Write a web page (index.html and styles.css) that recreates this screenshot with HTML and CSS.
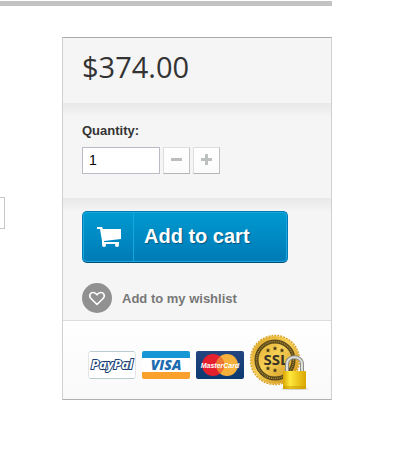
FILE: index.html
```
<!DOCTYPE html>
<html lang="en">
<head>
  <meta charset="UTF-8">
  <meta name="viewport" content="width=device-width, initial-scale=1.0">
  <title>Product</title>
  <link rel="stylesheet" href="styles.css">
</head>
<body>

  <div class="page">
    <div class="product">
      <div class="info"></div>

      <form class="buy-box">
        <div class="price-box">
          <p class="price">$374.00</p>
        </div>

        <div class="quantity-box">
          <label for="quantity">Quantity:</label>
          <div class="quantity-row">
            <input class="quantity" id="quantity" type="text" value="1">
            <button class="step" type="button" aria-label="Subtract">
              <svg width="11" height="11" viewBox="0 0 11 11"><path d="M0 4h11v3H0z" fill="#bdbdbd"/></svg>
            </button>
            <button class="step" type="button" aria-label="Add">
              <svg width="11" height="11" viewBox="0 0 11 11"><path d="M4 0h3v4h4v3H7v4H4V7H0V4h4z" fill="#bdc1bd"/></svg>
            </button>
          </div>
        </div>

        <div class="actions">
          <button class="add-to-cart" type="submit">
            <span class="cart-icon">
              <svg width="24" height="20" viewBox="0 0 24 20" fill="#fff">
                <path d="M0 0h5l1 2h18v10L7 14v1h15v2H5v-3L3 2H0z"/>
                <circle cx="7" cy="18" r="2"/>
                <circle cx="20" cy="18" r="2"/>
              </svg>
            </span>
            <span class="cart-text">Add to cart</span>
          </button>
          <a class="wishlist" href="#">
            <svg width="30" height="30" viewBox="0 0 30 30">
              <circle cx="15" cy="15" r="15" fill="#919191"/>
              <path d="M15 21.500L9.200 15.800C6 12.300 8.600 9.500 11.200 9.500c1.800 0 3 1.100 3.800 2.300 .8-1.200 2-2.300 3.800-2.300 2.600 0 5.200 2.800 2 6.300z" fill="none" stroke="#fff" stroke-width="1.600" stroke-linejoin="round"/>
            </svg>
            <span>Add to my wishlist</span>
          </a>
        </div>

        <div class="payment">
          <svg class="card" width="48" height="28" viewBox="0 0 48 28">
            <rect x=".5" y=".5" width="47" height="27" rx="2" fill="#fff" stroke="#e2e4e5"/>
            <path d="M2 .5h44M2 27.500h44" stroke="#b9cdd1"/>
            <text class="logo-paypal" x="24" y="18" text-anchor="middle">PayPal</text>
          </svg>
          <svg class="card" width="48" height="28" viewBox="0 0 48 28">
            <rect width="48" height="28" rx="2" fill="#fff"/>
            <path d="M0 7V2q0-2 2-2h44q2 0 2 2v5z" fill="#1598d3"/>
            <path d="M0 21v5q0 2 2 2h44q2 0 2-2v-5z" fill="#f9a12c"/>
            <text class="logo-visa" x="24" y="19" text-anchor="middle">VISA</text>
          </svg>
          <svg class="card" width="48" height="28" viewBox="0 0 48 28">
            <defs>
              <linearGradient id="navy" x2="0" y2="1">
                <stop offset="0" stop-color="#24457f"/>
                <stop offset="1" stop-color="#0b3a70"/>
              </linearGradient>
            </defs>
            <rect width="48" height="28" rx="2" fill="url(#navy)"/>
            <circle cx="31" cy="14" r="11" fill="#f5b13c"/>
            <circle cx="17" cy="14" r="11" fill="#e5202e"/>
            <path d="M24 5.500a11 11 0 0 1 0 17a11 11 0 0 1 0-17z" fill="#ee7733"/>
            <text class="logo-master" x="24" y="17" text-anchor="middle">MasterCard</text>
          </svg>
          <svg class="seal" width="60" height="58" viewBox="0 0 60 58">
            <defs>
              <linearGradient id="gold" x2="1" y2="1">
                <stop offset="0" stop-color="#d9a021"/>
                <stop offset=".45" stop-color="#f6cf55"/>
                <stop offset="1" stop-color="#c98a12"/>
              </linearGradient>
              <linearGradient id="lock">
                <stop offset="0" stop-color="#d9a500"/>
                <stop offset=".3" stop-color="#ffe83c"/>
                <stop offset="1" stop-color="#d9a700"/>
              </linearGradient>
            </defs>
            <circle cx="25" cy="27" r="24" fill="url(#gold)"/>
            <circle cx="25" cy="27" r="24.500" fill="none" stroke="#dca62a" stroke-width="1.500" stroke-dasharray="2 1"/>
            <circle cx="25" cy="27" r="18.500" fill="none" stroke="#57471c" stroke-width="4"/>
            <circle cx="25" cy="27" r="18.500" fill="none" stroke="#b08b30" stroke-width="1.500" stroke-dasharray="1 1"/>
            <g fill="#4b3c16">
              <path id="star" d="M25 13l.7 1.500 1.600.2-1.200 1.100.4 1.600-1.500-.8-1.500.8.4-1.600-1.200-1.100 1.600-.2z"/>
              <use href="#star" x="-7" y="2"/>
              <use href="#star" x="7" y="2"/>
              <use href="#star" y="22"/>
              <use href="#star" x="-7" y="20"/>
            </g>
            <text class="logo-ssl" x="26" y="32" text-anchor="middle">SSL</text>
            <ellipse cx="45" cy="56" rx="14" ry="1" fill="#d4d4d4"/>
            <path d="M37 40v-9c0-9 15-9 15 0v9" fill="none" stroke="#8d8d88" stroke-width="4"/>
            <path d="M37 40v-9c0-9 15-9 15 0v9" fill="none" stroke="#dededb" stroke-width="2"/>
            <rect x="33" y="38" width="23" height="18" rx="1" fill="url(#lock)"/>
            <path d="M33 53h23v2q0 1-1 1H34q-1 0-1-1z" fill="#c89600" opacity=".5"/>
          </svg>
        </div>
      </form>
    </div>
  </div>

</body>
</html>
```
FILE: styles.css
```
body {
  margin: 0;
  background: #fff;
  font-family: "Liberation Sans", Arial, sans-serif;
  font-size: 13px;
  line-height: 18px;
  color: #333;
}

.page {
  padding: 1px 69px 0 0;
}

.product {
  display: grid;
  grid-template-columns: 5px 1fr;
  column-gap: 57px;
  align-items: start;
  padding-top: 31px;
  border-top: 5px solid #c3c3c3;
}

/* Left column */
.info {
  height: 30px;
  margin-top: 160px;
  border: 1px solid #c7c7c7;
  border-left: 0;
}

/* Buy box */
.buy-box {
  background: #f5f5f5;
  border: 1px solid #d0d0d0;
  border-top-color: #aaa;
  border-bottom-color: #b0b0b0;
}

.price-box {
  padding: 9px 19px 16px;
}

.price {
  margin: 0;
  font-family: "Open Sans", sans-serif;
  font-size: 29px;
  font-weight: 500;
  line-height: 40px;
}

.quantity-box,
.actions {
  padding: 0 19px;
  background: linear-gradient(#e8e8e8, #f5f5f5 14px);
}

.quantity-box {
  padding-top: 19px;
  padding-bottom: 24px;
}

.quantity-box label {
  display: block;
  margin-bottom: 7px;
  font-weight: bold;
}

.quantity-row {
  display: flex;
  gap: 3px;
}

.quantity {
  box-sizing: border-box;
  width: 78px;
  height: 27px;
  padding: 0 6px 2px;
  border: 1px solid #b9bcc6;
  background: #fff;
  font: 14px "Liberation Sans", Arial, sans-serif;
  color: #000;
}

.step {
  display: flex;
  align-items: center;
  justify-content: center;
  width: 27px;
  height: 27px;
  padding: 0 0 2px;
  border: 1px solid #dedede;
  border-right-color: #c1c1c1;
  border-bottom-color: #b5b5b5;
  background: linear-gradient(#fff, #fbfbfb);
  cursor: pointer;
}

.actions {
  padding-top: 13px;
  padding-bottom: 7px;
}

.add-to-cart {
  display: flex;
  height: 52px;
  padding: 0;
  border: 1px solid #0079b6;
  border-bottom-color: #004d75;
  border-radius: 5px;
  background: linear-gradient(#009ad0, #007ab7);
  box-shadow: inset 0 0 0 1px #16a8dd;
  color: #fff;
  font: bold 20px "Liberation Sans", Arial, sans-serif;
  text-shadow: 1px 1px 1px #015883;
  cursor: pointer;
}

.cart-icon,
.cart-text {
  display: flex;
  align-items: center;
  align-self: stretch;
}

.cart-icon {
  padding: 0 12px 0 14px;
  border-right: 1px solid #16a8dd;
}

.cart-text {
  padding: 0 37px 2px 10px;
}

.wishlist {
  display: flex;
  align-items: center;
  gap: 10px;
  margin-top: 20px;
  color: #777;
  font-weight: bold;
  font-size: 13px;
  text-decoration: none;
}

.wishlist span {
  padding-top: 2px;
}

/* Payment logos */
.payment {
  display: flex;
  align-items: center;
  gap: 6px;
  padding: 12px 0 8px 25px;
  border-top: 1px solid #ddd;
  background: linear-gradient(#fff, #f9f9f9);
}

.card {
  margin-top: 6px;
}

.logo-paypal {
  font: italic bold 13px "Open Sans", sans-serif;
  fill: #fff;
  stroke: #1b3f76;
  stroke-width: 2px;
  paint-order: stroke;
}

.logo-visa {
  font: italic 800 14px "Open Sans", sans-serif;
  fill: #1c6bb0;
}

.logo-master {
  font: italic bold 7px "Liberation Sans", Arial, sans-serif;
  fill: #fff;
}

.logo-ssl {
  font: bold 15px "Open Sans", sans-serif;
  fill: #3b3424;
}
```
